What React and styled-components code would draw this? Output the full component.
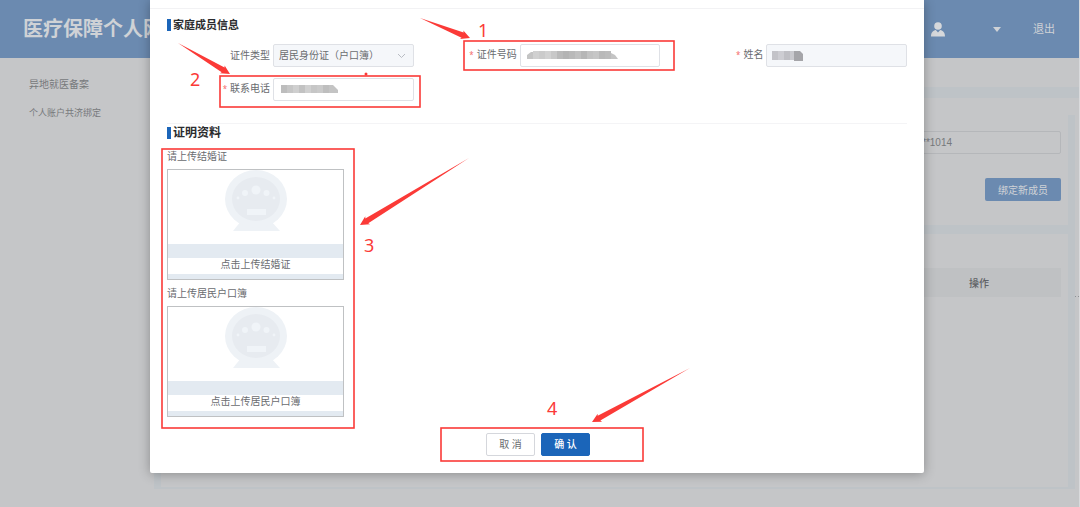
import React from "react";
import styled, { createGlobalStyle } from "styled-components";

const RED = "#fb3a37";

const mosaics = {
  idNumber: { x: 13, y: 7, cells: ["#d0d0d0", "#cbcbcb", "#d2d2d2", "#c8c8c8", "#bababa", "#b4b4b4", "#b9b9b9", "#c0c0c0", "#b6b6b6", "#c2c2c2", "#c6c6c6", "#b9b9b9", "#bcbcbc"], tail: "M7 11l4-3h2v7H7zM91 9l4 2 3 4h-7z", size: 6, height: 8, color: "#c4c4c4" },
  phone: { x: 8, y: 7, cells: ["#bdbdbd", "#c6c6c6", "#cfcfcf", "#c2c2c2", "#d0d0d0", "#c6c6c6", "#cacaca", "#bebebe"], tail: "M56 7h4l5 5v3h-9z", size: 6, height: 8, color: "#c4c4c4" },
  name: { x: 6, y: 7, cells: ["#c3c3c8", "#cdcdd2", "#bfbfc4", "#c9c9ce"], tail: "M28 7h6l3 3v7h-9z", size: 6, height: 9, color: "#a5a5a9" },
};

// 打码后的字段值
const Mosaic = ({ type }) => {
  const { x, y, cells, tail, size, height, color } = mosaics[type];
  return (
    <MosaicSvg width="100" height="22" aria-hidden="true">
      {cells.map((cell, i) => (
        <rect key={i} x={x + i * size} y={y} width={size} height={height} fill={cell} />
      ))}
      <path d={tail} fill={color} />
    </MosaicSvg>
  );
};

const Field = ({ id, label, required, disabled, mosaic }) => (
  <FieldRow>
    <FieldLabel htmlFor={id}>
      {required && <Star>*</Star>}
      {label}
    </FieldLabel>
    <Control>
      <Input id={id} disabled={disabled} />
      <Mosaic type={mosaic} />
    </Control>
  </FieldRow>
);

const Upload = ({ title, text }) => (
  <>
    <UploadTitle>{title}</UploadTitle>
    <UploadBox type="button">
      <Art viewBox="0 0 64 62" width="64" height="62" aria-hidden="true">
        <path d="M17 51h30l9 10H9z" fill="#eef2f6" />
        <ellipse cx="32" cy="29" rx="31" ry="29" fill="#eef2f6" />
        <ellipse cx="32" cy="29" rx="24" ry="22" fill="#e7ebf0" />
        <circle cx="32" cy="20" r="4.5" fill="#f0f4f8" />
        <circle cx="21" cy="23" r="3" fill="#f0f4f8" />
        <circle cx="42.5" cy="23" r="3" fill="#f0f4f8" />
        <circle cx="14" cy="28" r="1.4" fill="#f0f4f8" />
        <circle cx="50" cy="28" r="1.4" fill="#f0f4f8" />
        <rect x="23" y="39" width="19" height="6" fill="#f0f4f8" />
      </Art>
      <UploadFoot>
        <UploadText>{text}</UploadText>
      </UploadFoot>
    </UploadBox>
  </>
);

// 由细到粗的箭头
const Arrow = ({ from, to }) => {
  const dx = to[0] - from[0];
  const dy = to[1] - from[1];
  const len = Math.hypot(dx, dy);
  const at = (along, side) =>
    [
      from[0] + (dx * along) / len - (dy * side) / len,
      from[1] + (dy * along) / len + (dx * side) / len,
    ].join(",");
  const points = [
    at(0, 0), at(len - 8, -2.8), at(len - 9, -4.6), at(len, 0),
    at(len - 9, 4.6), at(len - 8, 2.8),
  ].join(" ");
  return <polygon points={points} fill={RED} />;
};

const marks = [
  { n: 1, box: [314, 41, 210, 29], from: [270, 18], to: [320, 38], text: [328, 37] },
  { n: 2, box: [70, 76, 200, 31], from: [28, 43], to: [80, 74], text: [40, 86] },
  { n: 3, box: [12, 149, 192, 279], from: [319, 158], to: [210, 225], text: [214, 252] },
  { n: 4, box: [291, 428, 202, 33], from: [540, 368], to: [442, 422], text: [397, 415] },
];

const App = () => {
  return (
    <Page>
      <GlobalStyle />
      <Header>
        <Logo>医疗保障个人网</Logo>
        <UserIcon width="14" height="15" viewBox="0 0 14 15" aria-hidden="true">
          <circle cx="7" cy="4" r="3.8" fill="#d6d8db" />
          <path d="M0 14.5c0-4 2-6 4.800-6.500L7 10.500 9.200 8C12 8.500 14 10.500 14 14.500z" fill="#d6d8db" />
        </UserIcon>
        <Caret />
        <Logout href="#logout">退出</Logout>
      </Header>
      <Body>
        <Side>
          <SideLink href="#record">异地就医备案</SideLink>
          <SideLink href="#bind" $small>个人账户共济绑定</SideLink>
        </Side>
        <Main>
          <Crumb />
          <Panel>
            <Cards>
              <Card>
                <AccountInput aria-label="1014" readOnly value="**1014" />
                <BindButton type="button">绑定新成员</BindButton>
              </Card>
              <Card $grow>
                <Table>
                  <thead>
                    <tr>
                      <td />
                      <th>操作</th>
                    </tr>
                  </thead>
                </Table>
              </Card>
            </Cards>
            <Strip>
              <svg width="4" height="14" aria-hidden="true">
                <path d="M0 1h1v1H0zM3 1h1v1H3z" fill="#8d9094" />
              </svg>
            </Strip>
          </Panel>
        </Main>
      </Body>
      <Footer />

      <Overlay>
        <Dialog role="dialog" aria-modal="true">
          <DialogTop />
          <Content>
            <SectionTitle $small>家庭成员信息</SectionTitle>
            <Fields>
              <FieldRow>
                <FieldLabel htmlFor="cardType">证件类型</FieldLabel>
                <Control>
                  <Select id="cardType" disabled>
                    <option>居民身份证（户口簿）</option>
                  </Select>
                  <Chevron width="9" height="6" viewBox="0 0 9 6" aria-hidden="true">
                    <path d="M1 1l3.500 3.500L8 1" fill="none" stroke="#b9bcc3" />
                  </Chevron>
                </Control>
              </FieldRow>
              <Field id="cardNo" label="证件号码" required mosaic="idNumber" />
              <Field id="name" label="姓名" required disabled mosaic="name" />
              <Field id="phone" label="联系电话" required mosaic="phone" />
            </Fields>
            <Line />
            <SectionTitle>证明资料</SectionTitle>
            <Uploads>
              <Upload title="请上传结婚证" text="点击上传结婚证" />
              <Upload title="请上传居民户口簿" text="点击上传居民户口簿" />
            </Uploads>
            <Actions>
              <Button type="button">取 消</Button>
              <Button type="button" $primary>确 认</Button>
            </Actions>
          </Content>

          <Marks width="774" height="473">
            {marks.map(({ n, box, from, to, text }) => (
              <g key={n}>
                <rect x={box[0]} y={box[1]} width={box[2]} height={box[3]} fill="none" stroke={RED} strokeWidth="1.6" />
                <Arrow from={from} to={to} />
                <text x={text[0]} y={text[1]}>{n}</text>
              </g>
            ))}
            <circle cx="216" cy="74" r="1.5" fill={RED} />
          </Marks>
        </Dialog>
      </Overlay>
    </Page>
  );
};

const GlobalStyle = createGlobalStyle`
* {
  box-sizing: border-box;
}
body {
  margin: 0;
  font-family: "Noto Sans", "Noto Sans CJK SC", sans-serif;
  font-size: 10px;
  line-height: 14px;
  color: #6a6c70;
}
button, input, select {
  font: inherit;
  color: inherit;
}
a {
  color: inherit;
  text-decoration: none;
}
`
const Page = styled.div`
position: relative;
display: flex;
flex-direction: column;
min-height: 100vh;
overflow: hidden;
background-color: #c5c6c8;
border-right: 1px solid #d9dadc;
`
const Header = styled.header`
display: flex;
align-items: center;
height: 58px;
padding: 0 24px 0 23px;
background-color: #6b8ab0;
color: #cfd2d6;
`
const Logo = styled.h1`
flex: 1;
margin: 0;
font-size: 20px;
line-height: 28px;
font-weight: 700;
`
const UserIcon = styled.svg`
margin-right: 48px;
`
const Caret = styled.span`
margin-right: 32px;
border: 4px solid transparent;
border-top: 5px solid #cfd2d6;
border-bottom: 0;
`
const Logout = styled.a`
font-size: 11px;
`
const Body = styled.div`
flex: 1;
display: flex;
`
const Side = styled.nav`
display: flex;
flex-direction: column;
gap: 15px;
width: 154px;
padding: 19px 0 0 29px;
color: #77797c;
`
const SideLink = styled.a`
font-size: ${(props) => props.$small ? "9px" : "10px"};
`
const Main = styled.main`
flex: 1;
display: flex;
flex-direction: column;
`
const Crumb = styled.div`
height: 40px;
border-bottom: 11px solid #bec3c7;
`
const Panel = styled.div`
flex: 1;
display: flex;
padding-top: 17px;
`
const Cards = styled.div`
flex: 1;
display: flex;
flex-direction: column;
gap: 9px;
padding: 0 7px 2px;
background-color: #bec3c7;
`
const Card = styled.section`
flex: ${(props) => props.$grow ? "1" : "none"};
display: flex;
flex-direction: column;
align-items: flex-end;
gap: 24px;
padding: ${(props) => props.$grow ? "34px 7px" : "16px 7px 24px"};
background-color: #c5c6c8;
`
const AccountInput = styled.input`
width: 148px;
height: 23px;
padding: 0 8px;
border: 1px solid #b5b7ba;
border-radius: 2px;
background-color: transparent;
font-family: "Liberation Sans", sans-serif;
color: #77797c;
`
const BindButton = styled.button`
width: 76px;
height: 23px;
padding: 0;
border: 0;
border-radius: 2px;
background-color: #6b8ab0;
color: #cfd2d6;
`
const Table = styled.table`
width: 100%;
border-collapse: collapse;
background-color: #bfc1c3;
th {
  width: 164px;
  height: 29px;
  padding: 0;
  font-weight: 500;
  color: #606266;
}
`
const Strip = styled.div`
display: flex;
align-items: center;
width: 4px;
`
const Footer = styled.footer`
height: 18px;
`
const Overlay = styled.div`
position: absolute;
top: 0;
left: 0;
right: 0;
padding: 0 155px 0 150px;
`
const Dialog = styled.div`
position: relative;
padding-bottom: 17px;
border-radius: 0 0 2px 2px;
background-color: white;
box-shadow: 0 1px 12px rgba(0, 0, 0, 0.3);
`
const DialogTop = styled.div`
height: 9px;
border-bottom: 1px solid #f2f2f4;
`
const Content = styled.div`
padding: 8px 17px 0;
`
const SectionTitle = styled.h2`
display: flex;
align-items: center;
gap: 2px;
margin: 0;
font-size: ${(props) => props.$small ? "11px" : "12px"};
line-height: 16px;
font-weight: 700;
color: #2b2c2e;
&::before {
  content: "";
  width: 4px;
  height: 12px;
  background-color: #1b65b9;
}
`
const Fields = styled.div`
display: grid;
grid-template-columns: repeat(3, 1fr);
row-gap: 11px;
padding: 11px 0 22px;
`
const FieldRow = styled.div`
display: flex;
align-items: center;
justify-content: flex-end;
`
const FieldLabel = styled.label`
padding: 0 3px 2px 0;
`
const Star = styled.span`
margin-right: 3px;
font-size: 8px;
color: #f56c6c;
`
const Control = styled.div`
position: relative;
width: 57%;
`
const Input = styled.input`
display: block;
width: 100%;
height: 23px;
padding: 0 6px;
border: 1px solid #dfe1e6;
border-radius: 2px;
background-color: ${(props) => props.disabled ? "#f5f7fa" : "white"};
`
const Select = styled.select`
display: block;
width: 100%;
height: 23px;
padding: 0 5px 2px;
border: 1px solid #dfe1e6;
border-radius: 2px;
background-color: #f5f7fa;
appearance: none;
opacity: 1;
`
const Chevron = styled.svg`
position: absolute;
top: 9px;
right: 8px;
`
const MosaicSvg = styled.svg`
position: absolute;
top: 0;
left: 0;
pointer-events: none;
`
const Line = styled.div`
height: 2px;
border-top: 1px solid #f4f4f6;
`
const Uploads = styled.div`
width: 177px;
padding-top: 2px;
`
const UploadTitle = styled.div`
padding: 6px 0;
`
const UploadBox = styled.button`
display: flex;
flex-direction: column;
align-items: center;
width: 100%;
height: 111px;
padding: 0;
border: 1px solid #bfc1c3;
background-color: white;
`
const Art = styled.svg`
margin-bottom: 12px;
`
const UploadFoot = styled.span`
flex: 1;
width: 100%;
padding: 14px 0 5px;
background-color: #e3eaf1;
`
const UploadText = styled.span`
display: block;
height: 16px;
line-height: 12px;
background-color: white;
`
const Actions = styled.div`
display: flex;
justify-content: center;
gap: 6px;
padding: 16px 0 0 2px;
`
const Button = styled.button`
width: 49px;
height: 23px;
padding: 0 0 2px;
border: 1px solid ${(props) => props.$primary ? "#1b65b9" : "#d5d7dc"};
border-radius: 2px;
background-color: ${(props) => props.$primary ? "#1b65b9" : "white"};
color: ${(props) => props.$primary ? "white" : "#6a6c70"};
font-weight: ${(props) => props.$primary ? "500" : "400"};
`
const Marks = styled.svg`
position: absolute;
top: 0;
left: 0;
pointer-events: none;
text {
  font-family: "Noto Sans", sans-serif;
  font-size: 18px;
  fill: ${RED};
}
`
export default App;
